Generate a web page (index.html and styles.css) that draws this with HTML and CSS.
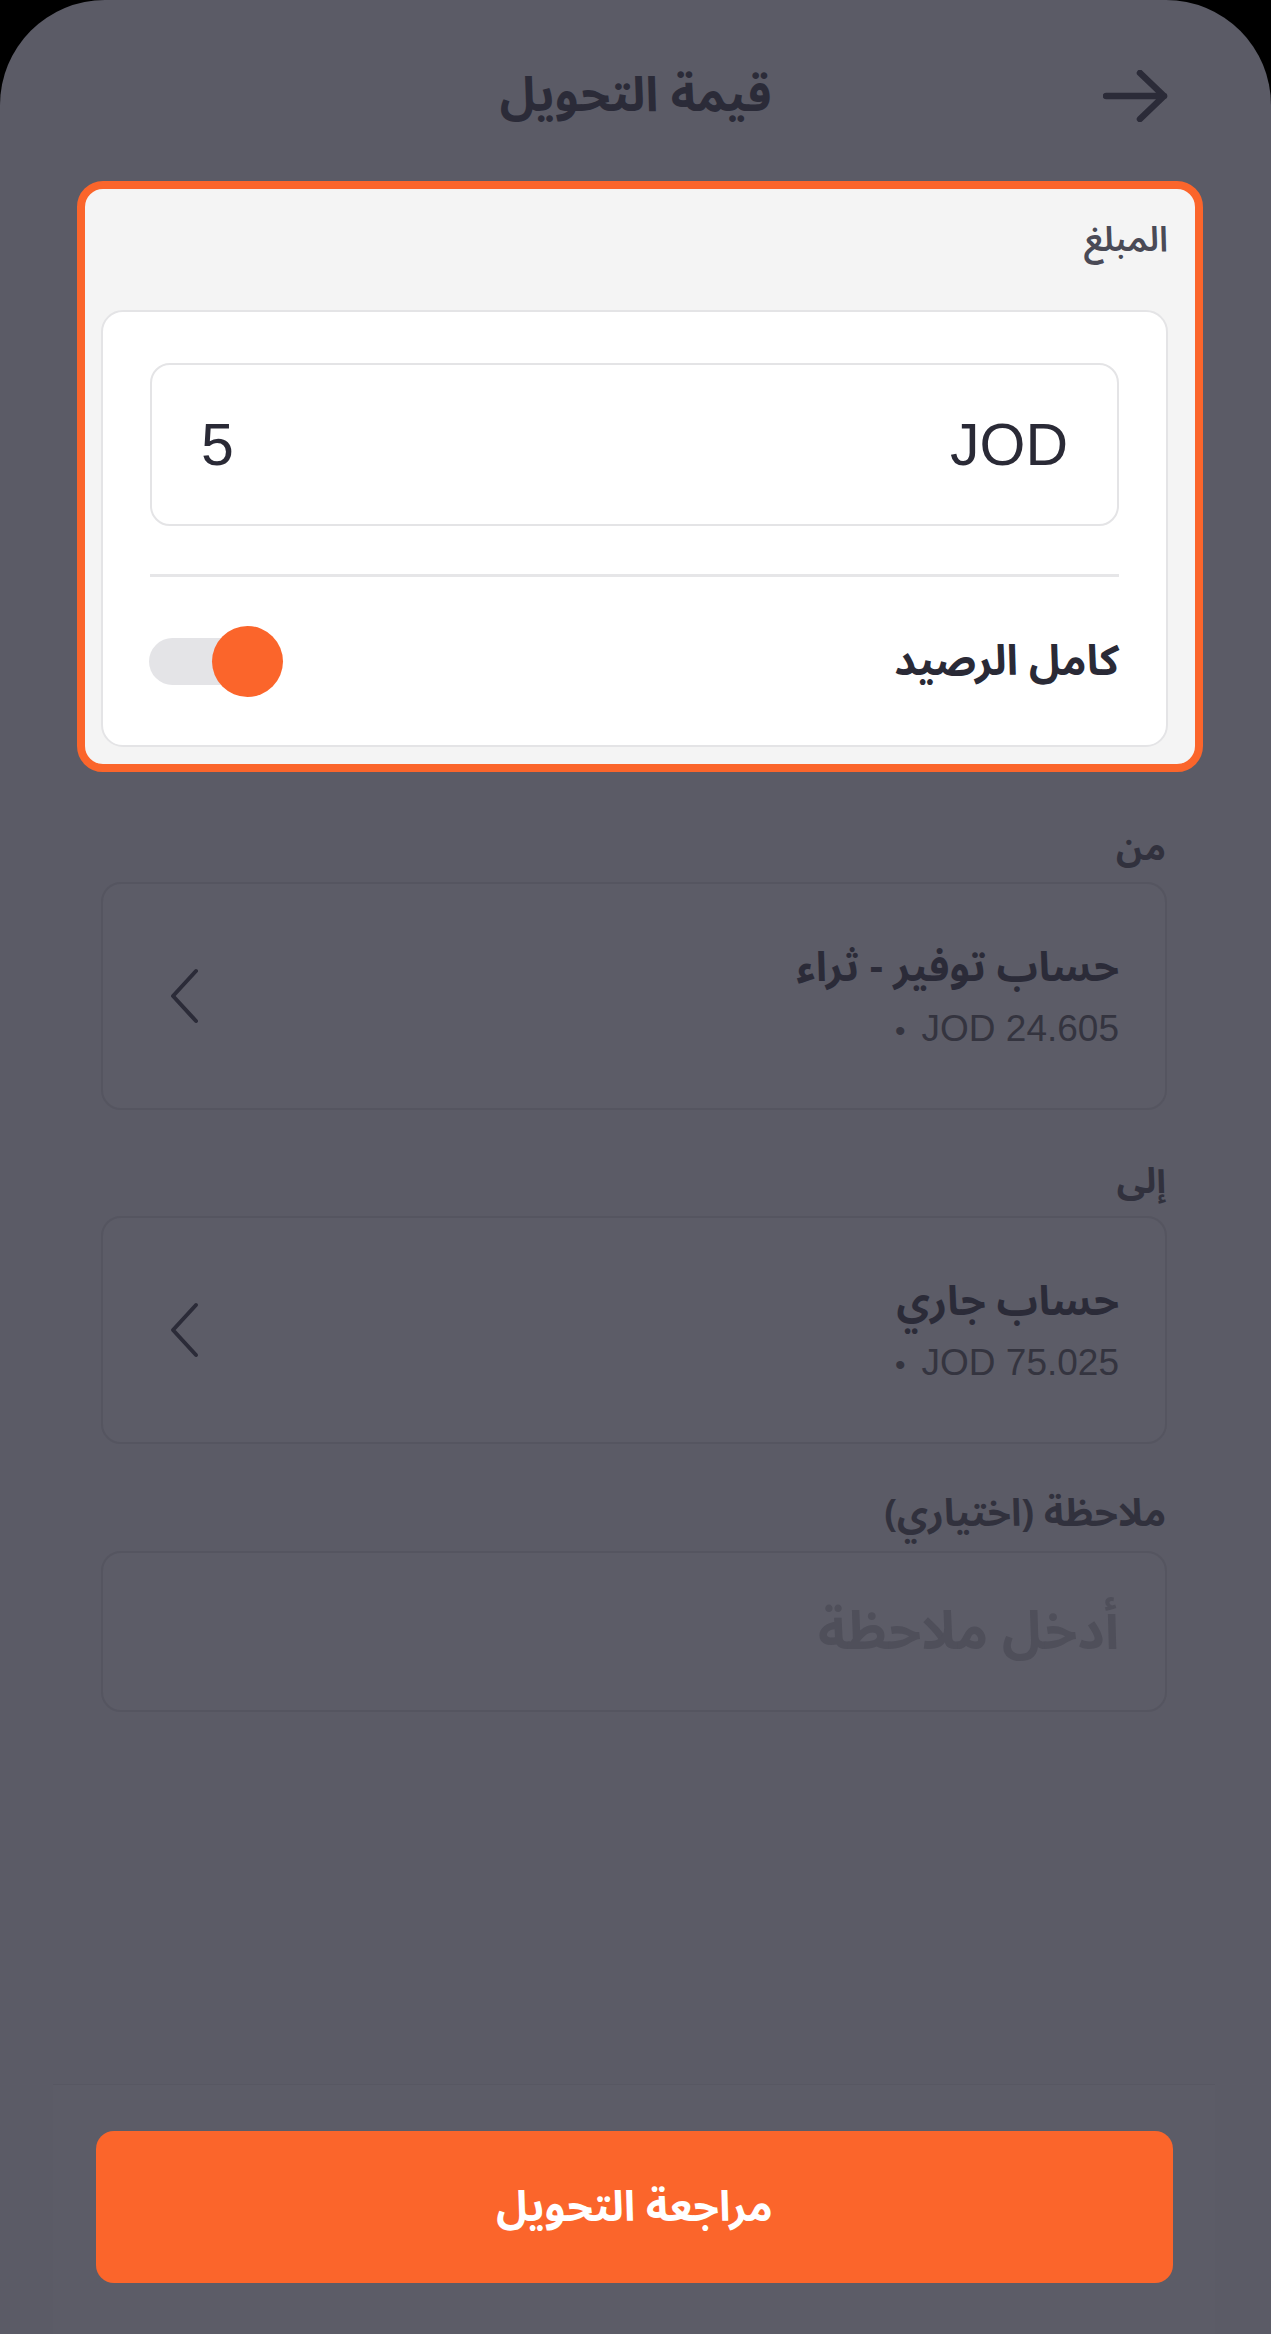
FILE: index.html
```html
<!DOCTYPE html>
<html lang="ar" dir="rtl">
    <head>
        <meta charset="UTF-8">
        <link rel="stylesheet" href="styles.css">
    </head>
    <body>
        <div class="screen">
            <header class="top-bar">
                <h1 class="top-title">قيمة التحويل</h1>
                <button class="back-btn" aria-label="رجوع">
                    <svg width="65" height="52" viewBox="0 0 65 52">
                        <path d="M3 26 H61 M37 3 L61 26 L37 49" fill="none" stroke="#2b2b38" stroke-width="6.5" stroke-linecap="round" stroke-linejoin="round"/>
                    </svg>
                </button>
            </header>

            <main class="content">
                <div class="amount-card">
                    <div class="amount-label">المبلغ</div>
                    <div class="amount-inner">
                        <div class="amount-input">
                            <span class="currency">JOD</span>
                            <span class="value">5</span>
                        </div>
                        <div class="divider"></div>
                        <div class="toggle-row">
                            <span class="toggle-text">كامل الرصيد</span>
                            <span class="toggle">
                                <span class="toggle-track"></span>
                                <span class="toggle-knob"></span>
                            </span>
                        </div>
                    </div>
                </div>

                <div class="field-label label-from">من</div>
                <div class="account-card">
                    <div class="account-info">
                        <div class="account-name">حساب توفير - ثراء</div>
                        <div class="account-balance"><span class="dot">&bull;</span>JOD 24.605</div>
                    </div>
                    <svg class="chevron" width="30" height="56" viewBox="0 0 30 56">
                        <path d="M27 3 L4 28 L27 53" fill="none" stroke="#2b2b38" stroke-width="4" stroke-linecap="round" stroke-linejoin="round"/>
                    </svg>
                </div>

                <div class="field-label label-to">إلى</div>
                <div class="account-card">
                    <div class="account-info">
                        <div class="account-name">حساب جاري</div>
                        <div class="account-balance"><span class="dot">&bull;</span>JOD 75.025</div>
                    </div>
                    <svg class="chevron" width="30" height="56" viewBox="0 0 30 56">
                        <path d="M27 3 L4 28 L27 53" fill="none" stroke="#2b2b38" stroke-width="4" stroke-linecap="round" stroke-linejoin="round"/>
                    </svg>
                </div>

                <div class="field-label label-note">ملاحظة (اختياري)</div>
                <div class="note-box">
                    <span class="note-placeholder">أدخل ملاحظة</span>
                </div>
            </main>

            <footer class="bottom-bar">
                <button class="review-btn">مراجعة التحويل</button>
            </footer>
        </div>
    </body>
</html>
```

FILE: styles.css
```css
body {
    margin: 0;
    background-color: black;
    font-family: "Noto Sans Arabic", "DejaVu Sans", sans-serif;
    color: #2b2b38;
}

.screen {
    width: 1271px;
    height: 2334px;
    background-color: #5b5b66;
    border-radius: 105px 105px 0 0;
    overflow: hidden;
    display: flex;
    flex-direction: column;
}

.top-bar {
    height: 181px;
    flex: 0 0 181px;
    display: flex;
    justify-content: center;
    align-items: flex-start;
    position: relative;
    box-sizing: border-box;
    padding-top: 64px;
}

.top-title {
    margin: 0;
    font-size: 48px;
    line-height: 64px;
    font-weight: bold;
    color: #2b2b38;
}

.back-btn {
    position: absolute;
    right: 103px;
    top: 70px;
    background: none;
    border: none;
    padding: 0;
    display: flex;
}

.content {
    flex: 1;
    display: flex;
    flex-direction: column;
    padding: 0 104px 0 101px;
}

/* highlighted amount card */
.amount-card {
    margin: 0 -36px 0 -24px;
    border: 8px solid #fb652b;
    border-radius: 26px;
    background-color: #f4f4f4;
    padding: 0 27px 17px 16px;
}

.amount-label {
    height: 121px;
    box-sizing: border-box;
    padding-top: 27px;
    font-size: 35px;
    line-height: 48px;
    font-weight: 600;
    color: #4a4a56;
}

.amount-inner {
    background: white;
    border: 2px solid #e4e4e6;
    border-radius: 22px;
    padding: 51px 47px 0;
}

.amount-input {
    height: 159px;
    border: 2px solid #e4e4e6;
    border-radius: 20px;
    display: flex;
    justify-content: space-between;
    align-items: center;
    padding: 0 49px;
    font-family: "Liberation Sans", Arial, sans-serif;
    font-size: 59px;
    color: #2a2a36;
}

.divider {
    height: 3px;
    background: #e6e6e8;
    margin-top: 48px;
}

.toggle-row {
    height: 168px;
    display: flex;
    justify-content: space-between;
    align-items: center;
}

.toggle-text {
    font-size: 42px;
    font-weight: bold;
    color: #2a2a36;
}

.toggle {
    position: relative;
    width: 134px;
    height: 71px;
    margin-left: -1px;
}

.toggle-track {
    position: absolute;
    left: 0;
    top: 12px;
    width: 112px;
    height: 47px;
    border-radius: 24px;
    background: #e4e4e7;
}

.toggle-knob {
    position: absolute;
    left: 63px;
    top: 0;
    width: 71px;
    height: 71px;
    border-radius: 50%;
    background: #fb652b;
}

/* dimmed fields */
.field-label {
    font-size: 36px;
    line-height: 44px;
    font-weight: bold;
    color: #31313d;
    padding-right: 1px;
}

.label-from {
    margin-top: 55px;
    margin-bottom: 11px;
}

.label-to {
    margin-top: 50px;
    margin-bottom: 12px;
}

.label-note {
    font-size: 38px;
    margin-top: 48px;
    margin-bottom: 15px;
}

.account-card {
    height: 228px;
    box-sizing: border-box;
    border: 2px solid #555560;
    border-radius: 20px;
    background: #5c5c67;
    display: flex;
    justify-content: space-between;
    align-items: center;
    padding: 0 46px 0 66px;
}

.account-info {
    display: flex;
    flex-direction: column;
    gap: 15px;
}

.account-name {
    font-size: 41px;
    line-height: 52px;
    font-weight: bold;
    color: #2b2b38;
}

.account-balance {
    direction: ltr;
    text-align: right;
    font-family: "Liberation Sans", Arial, sans-serif;
    font-size: 37px;
    line-height: 40px;
    color: #34343f;
}

.account-balance .dot {
    font-size: 30px;
    margin-right: 16px;
}

.chevron {
    display: block;
}

.note-box {
    height: 161px;
    box-sizing: border-box;
    border: 2px solid #555560;
    border-radius: 20px;
    background: #5c5c67;
    display: flex;
    align-items: center;
    padding: 0 46px;
}

.note-placeholder {
    font-size: 53px;
    font-weight: bold;
    color: #4f4f5a;
}

.bottom-bar {
    margin: 0 56px 0 53px;
    padding: 46px 42px 51px 43px;
    border-top: 1px solid #575762;
    background: #5c5c67;
}

.review-btn {
    display: block;
    width: 100%;
    height: 152px;
    border: none;
    border-radius: 18px;
    background: #fb652b;
    color: white;
    font-family: "Noto Sans Arabic", "DejaVu Sans", sans-serif;
    font-size: 42px;
    font-weight: bold;
}
```
